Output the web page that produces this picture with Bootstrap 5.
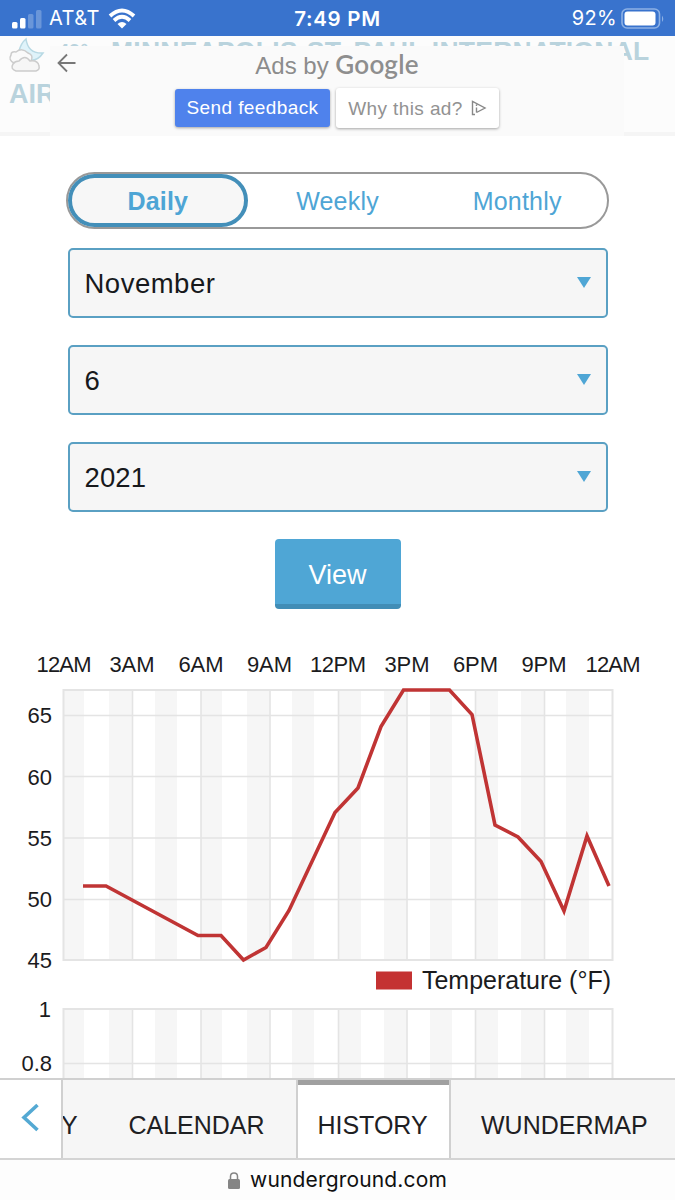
<!DOCTYPE html>
<html lang="en">
<head>
<meta charset="utf-8">
<meta name="viewport" content="width=device-width, initial-scale=1">
<title>Weather History</title>
<link href="https://cdn.jsdelivr.net/npm/bootstrap@5.3.0/dist/css/bootstrap.min.css" rel="stylesheet">
<style>
body{font-family:"Liberation Sans",Arial,sans-serif;color:#1e2023;background:#fff;width:675px;height:1200px;overflow:hidden;white-space:nowrap}
.status-bar{height:36px;background:#3973cd;color:#fff;font:400 20px/37px Inter,sans-serif}
.status-side{width:200px;height:37px}
.carrier{margin-left:-1px;letter-spacing:.5px}
.charge{letter-spacing:.3px}
.clock{font-weight:600;font-size:20.5px;letter-spacing:.7px}
.station{height:100px;background:#fcfcfc;border-bottom:4px solid #f5f5f5}
.station-name{color:#b9d3dd;font-weight:700;font-size:26.5px}
.name-row{height:30px;line-height:31px}
.city-row{line-height:56px;padding-left:9px;font-size:27px}
.temp-now{font-size:20px;width:53px}
.name-text{letter-spacing:.25px}
.ad-panel{left:50px;top:10px;width:574px;height:90px;background:#fafafa}
.ad-back{left:7px;top:7px}
.ads-by{font-size:24px;line-height:30px;color:#8c8c8c;padding-top:3px}
.ads-by b{font:600 26px/30px Lato,sans-serif;letter-spacing:.2px;color:#8e8e8e}
.ad-actions{gap:6px;margin-top:7px}
.ad-btn{height:38px;font-size:19px;line-height:37px;border-radius:3px;box-shadow:0 1px 3px rgba(0,0,0,.35);letter-spacing:.4px;padding:0;border:0}
.ad-send{width:155px;background:#4f82ec;color:#fff}
.ad-why{width:163px;height:40px;background:#fff;color:#929292}
.picker{width:543px;height:57px;border:2px solid #999;border-radius:29px;font-size:25px;color:#4ea5d5;margin:36px 0 19px}
.picker .nav-link{color:#4ea5d5;padding:0;line-height:54px;width:180px;text-align:center;letter-spacing:.2px}
.picker .nav-link.active{background:#f7f7f7;border:4px solid #438fb9;border-radius:29px;line-height:46px;font-weight:700}
.date-box{width:540px;height:70px;border:2px solid #5aa0c3;border-radius:5px;background:#f6f6f6;font-size:27.5px;color:#17191c;margin-bottom:27px;padding:0 15px}
.date-box span{padding-top:1px;letter-spacing:.1px}
.date-box .long{letter-spacing:.5px}
.view-btn{width:126px;height:70px;background:#4fa6d5;color:#fff;border:0;border-bottom:5px solid #418db6;border-radius:4px;font-size:27px;padding:7px 0 0}
.chart{height:438px;margin-top:31px}
.chart text{font-family:"Liberation Sans",Arial,sans-serif;fill:#1b1b1d;font-size:22px}
.chart .legend{font-size:25px}
.bottom-tabs{height:82px;background:#f6f6f6;border-top:2px solid #d0d0d0;border-bottom:2px solid #d4d4d4;font-size:25px}
.bottom-tabs .nav-link{color:#1e2023;padding:0;line-height:90px;height:78px}
.tab-back{width:63px;background:#fff;border-right:2px solid #d0d0d0!important}
.tab-prev{width:34px;overflow:hidden;text-indent:-2px}
.tab-cal{width:199px;text-align:center}
.bottom-tabs .tab-hist{width:155px;background:#fff;text-align:center;border:solid #d0d0d0;border-width:0 2px;box-shadow:inset 0 5px #a0a0a0;text-indent:-2px}
.tab-map{width:224px;padding-left:30px!important}
.address{height:40px;background:#fdfdfd;color:#101010;font:400 21px/38px Inter,sans-serif}
.site-name{letter-spacing:.15px}
</style>
</head>
<body>
<header>
  <div class="status-bar d-flex justify-content-between">
    <div class="status-side d-flex align-items-center ps-2">
      <svg width="38" height="24" class="ms-1" fill="#fff"><rect y="15" width="5.500" height="6.500" rx="1.500"/><rect x="8" y="11" width="5.500" height="10.500" rx="1.500"/><rect x="16" y="7" width="5.500" height="14.500" rx="1.500" opacity=".25"/><rect x="24" y="3" width="5.500" height="18.500" rx="1.500" opacity=".25"/></svg>
      <span class="carrier">AT&amp;T</span>
      <svg width="28" height="22" viewBox="0 0 28 22" class="ms-2" fill="none" stroke="#fff" stroke-width="3.800"><path d="M2 8Q14-3 26 8M6 12.500Q14 5 22 12.500"/><path d="M9.500 16Q14 12 18.500 16L14 20.500Z" fill="#fff" stroke="none"/></svg>
    </div>
    <span class="clock">7:49 PM</span>
    <div class="status-side d-flex justify-content-end align-items-center pe-2">
      <span class="charge">92%</span>
      <svg width="46" height="22" class="ms-1"><rect x="1" y="1" width="37.500" height="19" rx="5" fill="none" stroke="#8db1e5" stroke-width="1.600"/><rect x="3.500" y="3.500" width="31" height="14" rx="3" fill="#fff"/><path d="M41 7.500Q43.500 11 41 14Z" fill="#8db1e5"/></svg>
    </div>
  </div>
  <div class="station position-relative">
    <div class="station-name name-row d-flex">
      <svg width="58" height="42" viewBox="0 0 58 42" stroke-width="1.500" class="flex-shrink-0"><path d="M26 3Q28 18 43 17Q37 26 28 24L19 15Q21 7 26 3Z" fill="#dff3fa" stroke="#b8d9e4"/><path d="M14 27Q8 24 11 19Q11 15 16 16Q22 11 28 17Q34 19 31 25" fill="#fafafa" stroke="#ccc"/><path d="M16 35Q10 33 13 28Q15 25 19 25Q25 18 30 25Q38 24 39 30Q40 34 36 35Z" fill="#f6f6f6" stroke="#ccc"/></svg>
      <span class="temp-now">49°</span><span class="name-text">MINNEAPOLIS-ST. PAUL INTERNATIONAL</span>
    </div>
    <div class="station-name city-row">AIRPORT</div>
    <div class="ad-panel position-absolute">
      <svg width="20" height="20" class="ad-back position-absolute" fill="none" stroke="#777" stroke-width="1.800"><path d="M18.500 10H2M10 1.500L1.500 10L10 18.500"/></svg>
      <div class="ads-by text-center">Ads by <b>Google</b></div>
      <div class="ad-actions d-flex justify-content-center align-items-center">
        <span class="btn ad-btn ad-send">Send feedback</span>
        <span class="btn ad-btn ad-why d-flex align-items-center justify-content-center">Why this ad?<svg width="16" height="16" class="ms-2" fill="none" stroke="#888" stroke-width="1.400"><path d="M4 14.500H1.500V1.500L14 8L5.500 12.500M5.500 7.500V12.500M5.500 4.500V6"/></svg></span>
      </div>
    </div>
  </div>
</header>
<main class="d-flex flex-column align-items-center">
  <nav class="picker nav flex-nowrap">
    <a class="nav-link active">Daily</a><a class="nav-link">Weekly</a><a class="nav-link">Monthly</a>
  </nav>
  <div class="date-box d-flex align-items-center justify-content-between"><span class="long">November</span><svg width="14" height="12"><path d="M0 0H14L7 11Z" fill="#4fa6d5"/></svg></div>
  <div class="date-box d-flex align-items-center justify-content-between"><span>6</span><svg width="14" height="12"><path d="M0 0H14L7 11Z" fill="#4fa6d5"/></svg></div>
  <div class="date-box d-flex align-items-center justify-content-between"><span>2021</span><svg width="14" height="12"><path d="M0 0H14L7 11Z" fill="#4fa6d5"/></svg></div>
  <button class="btn view-btn">View</button>
  <svg class="chart" width="675" height="438" viewBox="0 640 675 438">
    <path fill="#f6f6f6" d="M63 690h21v270h-21zM109 690h23v270h-23zM155 690h22v270h-22zM201 690h21v270h-21zM247 690h23v270h-23zM292 690h22v270h-22zM338 690h23v270h-23zM384 690h23v270h-23zM430 690h22v270h-22zM475 690h23v270h-23zM521 690h23v270h-23zM566 690h23v270h-23z"/>
    <path fill="#f6f6f6" d="M63 1009h21v70h-21zM109 1009h23v70h-23zM155 1009h22v70h-22zM201 1009h21v70h-21zM247 1009h23v70h-23zM292 1009h22v70h-22zM338 1009h23v70h-23zM384 1009h23v70h-23zM430 1009h22v70h-22zM475 1009h23v70h-23zM521 1009h23v70h-23zM566 1009h23v70h-23z"/>
    <g fill="none" stroke="#e4e4e4" stroke-width="1.600">
      <path d="M132.500 690V960M201 690V960M270 690V960M338.500 690V960M407 690V960M475.500 690V960M544.500 690V960M63 715.500H612M63 776.500H612M63 838H612M63 899.500H612"/>
      <path d="M132.500 1009V1079M201 1009V1079M270 1009V1079M338.500 1009V1079M407 1009V1079M475.500 1009V1079M544.500 1009V1079M63 1063.500H612"/>
      <path stroke-width="2" d="M63.500 690H612.500V960H63.500ZM63.500 1079V1009H612.500V1079"/>
    </g>
    <path fill="none" stroke="#c03434" stroke-width="3.600" d="M83 886H106L198 935.500H221L243.500 960L266 947.500L289 910.500L335 812.500L358 788L381 726.500L403.500 690H449.500L472 714.500L495 825L518 837L541 861.500L564 911L587 836L609 886"/>
    <g text-anchor="middle"><text x="64" y="672" textLength="55">12AM</text><text x="132" y="672">3AM</text><text x="201" y="672">6AM</text><text x="269.500" y="672">9AM</text><text x="338" y="672" textLength="56">12PM</text><text x="407" y="672">3PM</text><text x="475.500" y="672">6PM</text><text x="544" y="672">9PM</text><text x="613" y="672" textLength="55">12AM</text></g>
    <g text-anchor="end"><text x="52" y="723">65</text><text x="52" y="785">60</text><text x="52" y="846">55</text><text x="52" y="907">50</text><text x="52" y="968">45</text><text x="51" y="1016.500">1</text><text x="52" y="1070.500">0.8</text></g>
    <rect x="376" y="971.500" width="36" height="18" fill="#c43232"/>
    <text class="legend" x="422" y="989" textLength="189">Temperature (°F)</text>
  </svg>
</main>
<nav class="bottom-tabs nav flex-nowrap">
  <a class="nav-link tab-back"><svg width="61" height="78" class="d-block" fill="none" stroke="#54a9d3" stroke-width="3.600"><path d="M37.500 25L24 37.500L37.500 50"/></svg></a>
  <a class="nav-link tab-prev">Y</a><a class="nav-link tab-cal">CALENDAR</a>
  <a class="nav-link tab-hist">HISTORY</a><a class="nav-link tab-map">WUNDERMAP</a>
</nav>
<footer class="address d-flex justify-content-center align-items-center">
  <svg width="12" height="17" class="me-2"><rect y="7" width="12" height="10" rx="1.500" fill="#858585"/><path d="M2.500 8V4.500Q2.500 1 6 1T9.500 4.500V8" fill="none" stroke="#858585" stroke-width="1.500"/></svg>
  <span class="site-name">&#8202;wunderground.com</span>
</footer>
<script src="https://cdn.jsdelivr.net/npm/bootstrap@5.3.0/dist/js/bootstrap.bundle.min.js"></script>
</body>
</html>
